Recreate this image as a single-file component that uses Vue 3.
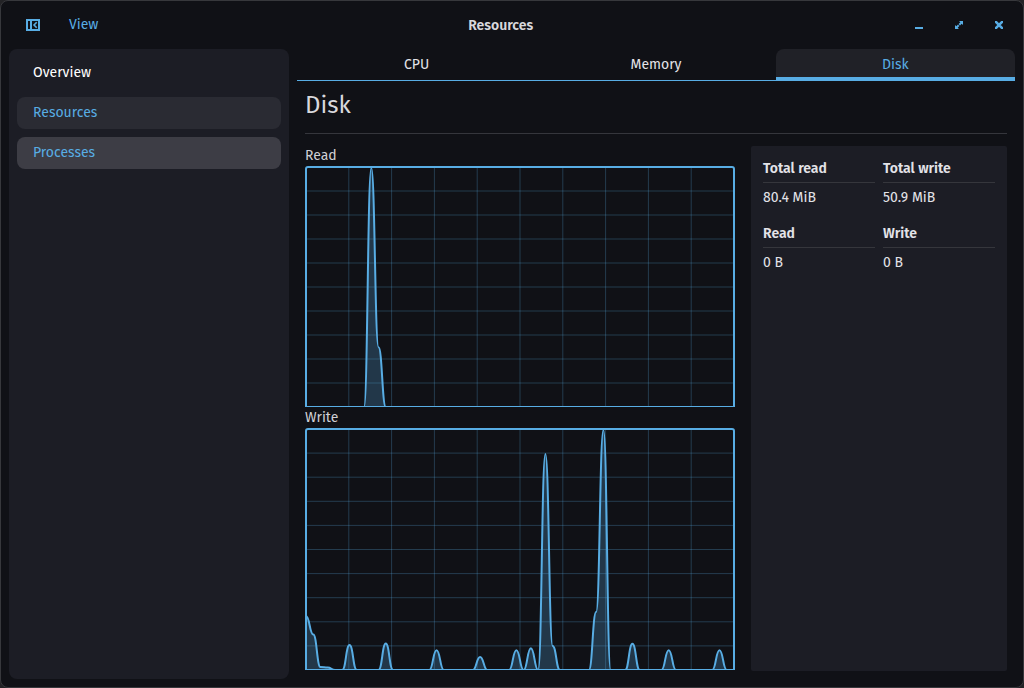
<script setup>
const navItems = [
  { id: 'overview', label: 'Overview' },
  { id: 'resources', label: 'Resources', state: 'selected' },
  { id: 'processes', label: 'Processes', state: 'hovered' },
]
const tabs = [
  { id: 'cpu', label: 'CPU' },
  { id: 'memory', label: 'Memory' },
  { id: 'disk', label: 'Disk', active: true },
]
const stats = [
  { label: 'Total read', value: '80.4 MiB' },
  { label: 'Total write', value: '50.9 MiB' },
  { label: 'Read', value: '0 B' },
  { label: 'Write', value: '0 B' },
]

const W = 430
const H = 242
const SAMPLES = 60

// Sparse samples: index -> share of the chart height.
const charts = [
  { id: 'read', label: 'Read', samples: { 9: 1, 10: 0.25 } },
  {
    id: 'write',
    label: 'Write',
    samples: {
      0: 0.225, 1: 0.148, 2: 0.012, 3: 0.01, 6: 0.104, 11: 0.11, 18: 0.082, 24: 0.054,
      29: 0.082, 31: 0.091, 33: 0.9, 34: 0.1, 40: 0.242, 41: 1, 45: 0.109, 50: 0.082, 57: 0.082,
    },
  },
].map((chart) => ({ ...chart, line: curve(chart.samples) }))

function curve(samples) {
  const step = (W - 2) / (SAMPLES - 1)
  const point = (i) => [1 + i * step, H - (samples[i] ?? 0) * (H - 2)]
  let [px, py] = point(0)
  let d = `M${px} ${py}`
  for (let i = 1; i < SAMPLES; i++) {
    const [x, y] = point(i)
    const mid = (px + x) / 2
    d += ` C${mid} ${py} ${mid} ${y} ${x} ${y}`
    px = x
    py = y
  }
  return d
}

const gridX = Array.from({ length: 9 }, (_, i) => 1 + ((i + 1) * (W - 2)) / 10)
const gridY = Array.from({ length: 9 }, (_, i) => 1 + ((i + 1) * (H - 1)) / 10)
</script>

<template>
  <div class="window">
    <header class="titlebar">
      <div class="start">
        <button class="icon-btn" type="button" aria-label="Toggle sidebar">
          <svg width="14" height="12" viewBox="0 0 14 12">
            <path d="M0 0H14V12H0ZM2 2V10H4V2ZM6 2V10H12V2Z" fill="currentColor" fill-rule="evenodd" />
            <path d="M10.7 3.2L8 6L10.7 8.8" fill="none" stroke="currentColor" stroke-width="1.6" />
          </svg>
        </button>
        <button class="menu-btn" type="button">View</button>
      </div>
      <h1>Resources</h1>
      <div class="controls">
        <button class="icon-btn" type="button" aria-label="Minimize">
          <svg width="8" height="8" viewBox="0 0 8 8"><path d="M0 6H8V8H0Z" fill="currentColor" /></svg>
        </button>
        <button class="icon-btn" type="button" aria-label="Maximize">
          <svg width="8" height="8" viewBox="0 0 8 8">
            <path d="M4 0H8V4L6.7 2.7L5 4.4L3.6 3L5.3 1.3ZM4 8H0V4L1.3 5.3L3 3.6L4.4 5L2.7 6.7Z" fill="currentColor" />
          </svg>
        </button>
        <button class="icon-btn" type="button" aria-label="Close">
          <svg width="8" height="8" viewBox="0 0 8 8">
            <path d="M0 0L8 8M8 0L0 8" stroke="currentColor" stroke-width="2.6" />
          </svg>
        </button>
      </div>
    </header>

    <div class="body">
      <nav class="sidebar" aria-label="Pages">
        <button v-for="item in navItems" :key="item.id" type="button" class="nav-item" :class="item.state">
          {{ item.label }}
        </button>
      </nav>

      <main class="main">
        <div class="tabs" role="tablist">
          <button
            v-for="tab in tabs"
            :key="tab.id"
            type="button"
            role="tab"
            class="tab"
            :class="{ active: tab.active }"
            :aria-selected="tab.active ? 'true' : 'false'"
          >
            {{ tab.label }}
          </button>
        </div>

        <section class="page">
          <h2>Disk</h2>
          <div class="columns">
            <div class="charts">
              <figure v-for="chart in charts" :key="chart.id">
                <figcaption>{{ chart.label }}</figcaption>
                <div class="plot">
                  <svg :viewBox="`0 0 ${W} ${H}`" preserveAspectRatio="none" aria-hidden="true">
                    <g class="grid">
                      <path v-for="x in gridX" :key="'x' + x" :d="`M${x} 0V${H}`" />
                      <path v-for="y in gridY" :key="'y' + y" :d="`M0 ${y}H${W}`" />
                    </g>
                    <path class="area" :d="`${chart.line} V${H} H1 Z`" />
                    <path class="line" :d="chart.line" />
                  </svg>
                </div>
              </figure>
            </div>
            <dl class="stats">
              <div v-for="stat in stats" :key="stat.label">
                <dt>{{ stat.label }}</dt>
                <dd>{{ stat.value }}</dd>
              </div>
            </dl>
          </div>
        </section>
      </main>
    </div>
  </div>
</template>

<style>
body {
  background: #232326;
}
</style>

<style scoped>
.window {
  --accent: #58ade4;
  --rule: #35363c;
  --panel: #1c1d25;
  box-sizing: border-box;
  min-height: 100vh;
  display: flex;
  flex-direction: column;
  border: 1px solid #37383c;
  border-radius: 8px;
  background: #101116;
  color: #e3e3e8;
  font: 14px/20px "Fira Sans", "Noto Sans", sans-serif;
}
button {
  border: 0;
  margin: 0;
  padding: 0;
  background: none;
  color: inherit;
  font: inherit;
}
svg {
  display: block;
}
.titlebar {
  height: 48px;
  padding: 0 8px;
  display: flex;
  align-items: center;
  color: var(--accent);
}
.start {
  display: flex;
  align-items: center;
  gap: 12px;
  padding-left: 8px;
}
.icon-btn {
  width: 32px;
  height: 32px;
  display: grid;
  place-items: center;
}
.menu-btn {
  padding: 6px 8px;
}
h1 {
  flex: 1;
  margin: 0;
  padding-top: 2px;
  color: #d8d8dc;
  font-size: 14px;
  font-weight: 600;
  text-align: center;
}
.controls {
  display: flex;
  gap: 8px;
  padding-left: 8px;
}
.body {
  flex: 1;
  display: flex;
  gap: 8px;
  padding: 0 8px 8px;
}
.sidebar {
  flex: 0 0 264px;
  display: flex;
  flex-direction: column;
  gap: 8px;
  padding: 8px;
  border-radius: 8px;
  background: var(--panel);
}
.nav-item {
  height: 32px;
  padding: 0 16px;
  border-radius: 8px;
  color: #fff;
  text-align: left;
}
.nav-item.selected {
  background: #2a2b33;
  color: var(--accent);
}
.nav-item.hovered {
  background: #3d3d45;
  color: var(--accent);
}
.main {
  flex: 1;
  min-width: 0;
  display: flex;
  flex-direction: column;
}
.tabs {
  display: grid;
  grid-template-columns: repeat(3, 1fr);
}
.tab {
  height: 32px;
  padding-top: 1px;
  border-bottom: 1px solid var(--accent);
}
.tab.active {
  padding-top: 4px;
  border-bottom-width: 4px;
  border-radius: 8px 8px 0 0;
  background: #202127;
  color: var(--accent);
}
.page {
  flex: 1;
  display: flex;
  flex-direction: column;
  padding: 8px;
}
h2 {
  margin: 0 0 12px;
  padding-bottom: 12px;
  border-bottom: 1px solid var(--rule);
  color: #d8d8dc;
  font-size: 24px;
  font-weight: 400;
  line-height: 32px;
}
.columns {
  flex: 1;
  display: flex;
  gap: 16px;
}
.charts {
  flex: 1;
  min-width: 0;
  display: grid;
  grid-template-rows: 1fr 1fr;
  padding-bottom: 1px;
}
figure {
  margin: 0;
  display: flex;
  flex-direction: column;
}
figure:first-child {
  padding-bottom: 1px;
}
figcaption {
  line-height: 20px;
  color: #d0d0d5;
}
.plot {
  flex: 1;
  position: relative;
}
.plot::after {
  content: "";
  position: absolute;
  inset: 0;
  border: 2px solid var(--accent);
  border-bottom-width: 1px;
  border-radius: 3px 3px 0 0;
}
.plot svg {
  position: absolute;
  width: 100%;
  height: 100%;
}
.plot path {
  vector-effect: non-scaling-stroke;
}
.grid path {
  stroke: var(--accent);
  stroke-opacity: 0.28;
}
.area {
  fill: var(--accent);
  fill-opacity: 0.25;
}
.line {
  fill: none;
  stroke: var(--accent);
  stroke-width: 2;
}
.stats {
  flex: 0 0 232px;
  margin: 0;
  padding: 12px;
  display: grid;
  grid-template-columns: 1fr 1fr;
  align-content: start;
  gap: 14px 8px;
  border-radius: 2px;
  background: var(--panel);
  line-height: 22px;
}
dt {
  padding-bottom: 2px;
  border-bottom: 1px solid var(--rule);
  font-weight: 600;
}
dd {
  margin: 4px 0 0;
}
</style>
